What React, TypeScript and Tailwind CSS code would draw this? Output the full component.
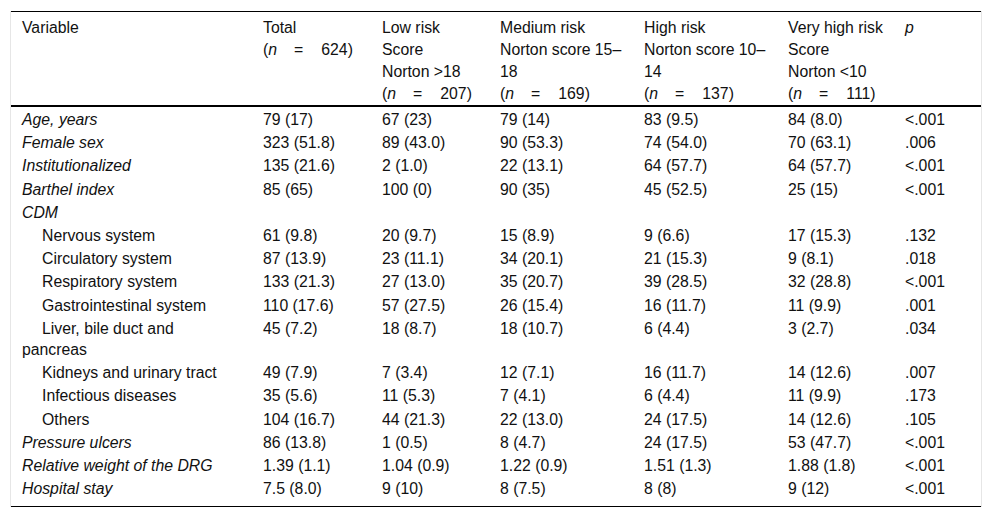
import React from 'react';

type Row = {
  label: string;
  italic?: boolean;
  sub?: boolean;
  wrap?: [string, string];
  values: string[];
};

const rows: Row[] = [
  { label: 'Age, years', italic: true, values: ['79 (17)', '67 (23)', '79 (14)', '83 (9.5)', '84 (8.0)', '<.001'] },
  { label: 'Female sex', italic: true, values: ['323 (51.8)', '89 (43.0)', '90 (53.3)', '74 (54.0)', '70 (63.1)', '.006'] },
  { label: 'Institutionalized', italic: true, values: ['135 (21.6)', '2 (1.0)', '22 (13.1)', '64 (57.7)', '64 (57.7)', '<.001'] },
  { label: 'Barthel index', italic: true, values: ['85 (65)', '100 (0)', '90 (35)', '45 (52.5)', '25 (15)', '<.001'] },
  { label: 'CDM', italic: true, values: ['', '', '', '', '', ''] },
  { label: 'Nervous system', sub: true, values: ['61 (9.8)', '20 (9.7)', '15 (8.9)', '9 (6.6)', '17 (15.3)', '.132'] },
  { label: 'Circulatory system', sub: true, values: ['87 (13.9)', '23 (11.1)', '34 (20.1)', '21 (15.3)', '9 (8.1)', '.018'] },
  { label: 'Respiratory system', sub: true, values: ['133 (21.3)', '27 (13.0)', '35 (20.7)', '39 (28.5)', '32 (28.8)', '<.001'] },
  { label: 'Gastrointestinal system', sub: true, values: ['110 (17.6)', '57 (27.5)', '26 (15.4)', '16 (11.7)', '11 (9.9)', '.001'] },
  { label: '', sub: true, wrap: ['Liver, bile duct and', 'pancreas'], values: ['45 (7.2)', '18 (8.7)', '18 (10.7)', '6 (4.4)', '3 (2.7)', '.034'] },
  { label: 'Kidneys and urinary tract', sub: true, values: ['49 (7.9)', '7 (3.4)', '12 (7.1)', '16 (11.7)', '14 (12.6)', '.007'] },
  { label: 'Infectious diseases', sub: true, values: ['35 (5.6)', '11 (5.3)', '7 (4.1)', '6 (4.4)', '11 (9.9)', '.173'] },
  { label: 'Others', sub: true, values: ['104 (16.7)', '44 (21.3)', '22 (13.0)', '24 (17.5)', '14 (12.6)', '.105'] },
  { label: 'Pressure ulcers', italic: true, values: ['86 (13.8)', '1 (0.5)', '8 (4.7)', '24 (17.5)', '53 (47.7)', '<.001'] },
  { label: 'Relative weight of the DRG', italic: true, values: ['1.39 (1.1)', '1.04 (0.9)', '1.22 (0.9)', '1.51 (1.3)', '1.88 (1.8)', '<.001'] },
  { label: 'Hospital stay', italic: true, values: ['7.5 (8.0)', '9 (10)', '8 (7.5)', '8 (8)', '9 (12)', '<.001'] },
];

function N({ n }: { n: number }) {
  return (
    <>
      (<i>n</i>
      <span className="ml-[17px] mr-[18px]">=</span>
      {n})
    </>
  );
}

export default function App() {
  return (
    <div className="bg-white pt-[11px] pl-[10px] w-[992px] h-[518px] font-['Liberation_Sans',Arial,sans-serif] text-[15.8px] text-[#111]">
      <div className="w-[972px] border-x border-[#e6e6e6]">
        <table className="table-fixed w-[970px] border-collapse">
          <colgroup>
            <col className="w-[241px]" />
            <col className="w-[119px]" />
            <col className="w-[118px]" />
            <col className="w-[144px]" />
            <col className="w-[144px]" />
            <col className="w-[117px]" />
            <col className="w-[87px]" />
          </colgroup>
          <thead>
            <tr className="border-t border-black border-b-2 align-top text-left leading-[22px] whitespace-nowrap">
              <th className="font-normal pl-[11px] pt-[5px] pb-0 h-[94px]">Variable</th>
              <th className="font-normal pl-[11px] pt-[5px]">
                Total
                <br />
                <N n={624} />
              </th>
              <th className="font-normal pl-[11px] pt-[5px]">
                Low risk
                <br />
                Score
                <br />
                Norton &gt;18
                <br />
                <N n={207} />
              </th>
              <th className="font-normal pl-[11px] pt-[5px]">
                Medium risk
                <br />
                Norton score 15–
                <br />
                18
                <br />
                <N n={169} />
              </th>
              <th className="font-normal pl-[11px] pt-[5px]">
                High risk
                <br />
                Norton score 10–
                <br />
                14
                <br />
                <N n={137} />
              </th>
              <th className="font-normal pl-[11px] pt-[5px]">
                Very high risk
                <br />
                Score
                <br />
                Norton &lt;10
                <br />
                <N n={111} />
              </th>
              <th className="font-normal pl-[11px] pt-[5px]">
                <i>p</i>
              </th>
            </tr>
          </thead>
          <tbody className="border-b border-black">
            {rows.map((r, i) => {
              const last = i === rows.length - 1;
              const cell = `pl-[11px] pt-[2px] align-top leading-[21.2px] whitespace-nowrap ${last ? 'pb-[7px]' : 'pb-0'}`;
              return (
                <tr key={i}>
                  <td className={`${cell} ${r.italic ? 'italic' : ''} ${r.sub ? 'indent-[20px]' : ''}`}>
                    {r.wrap ? (
                      <>
                        {r.wrap[0]}
                        <br />
                        {r.wrap[1]}
                      </>
                    ) : (
                      r.label
                    )}
                  </td>
                  {r.values.map((v, j) => (
                    <td key={j} className={cell}>
                      {v}
                    </td>
                  ))}
                </tr>
              );
            })}
          </tbody>
        </table>
      </div>
    </div>
  );
}
